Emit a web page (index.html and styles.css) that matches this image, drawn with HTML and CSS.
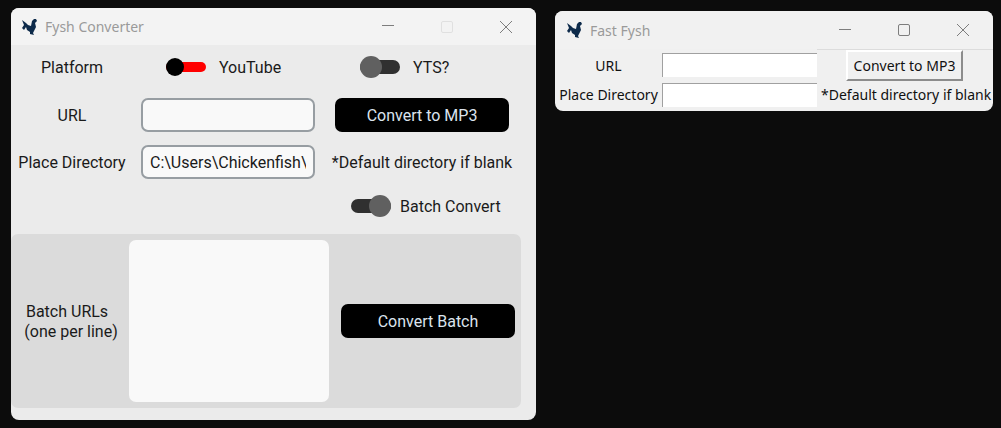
FILE: index.html
```html
<!DOCTYPE html>
<html lang="en">
<head>
    <meta charset="UTF-8">
    <title>Fysh Converter</title>
    <link rel="stylesheet" href="styles.css">
</head>
<body>
<div class="desktop">
    <!-- CustomTkinter window -->
    <div class="window fysh">
        <div class="titlebar">
            <svg class="app-icon" viewBox="0 0 18 18"><path d="M1 2L5 5L7 7L10 8L11 3L13 1L15 1L16 3L14 5L15 9L13 13L12 15L13 17L9 16L9 14L6 12L5 9L3 12L1 10L3 7Z"/></svg>
            <span class="title">Fysh Converter</span>
            <div class="caption">
                <div class="cap-btn"><svg viewBox="0 0 14 14"><path d="M1 5.5h12"/></svg></div>
                <div class="cap-btn off"><svg viewBox="0 0 14 14"><rect x="1.5" y="1.5" width="11" height="11" rx="1.5"/></svg></div>
                <div class="cap-btn"><svg viewBox="0 0 14 14"><path d="M1 1l12 12M13 1L1 13"/></svg></div>
            </div>
        </div>

        <div class="form">
            <div class="lbl">Platform</div>
            <div class="sw-cell">
                <span class="switch small"><i></i></span>
                <span>YouTube</span>
            </div>
            <div class="sw-cell">
                <span class="switch"><i></i></span>
                <span>YTS?</span>
            </div>

            <div class="lbl">URL</div>
            <input class="entry" type="text">
            <button class="btn">Convert to MP3</button>

            <div class="lbl">Place Directory</div>
            <input class="entry" type="text" value="C:\Users\Chickenfish\">
            <div class="note">*Default directory if blank</div>

            <div></div>
            <div></div>
            <div class="sw-cell batch">
                <span class="switch on"><i></i></span>
                <span>Batch Convert</span>
            </div>
        </div>

        <div class="panel">
            <div class="lbl batch-lbl">Batch URLs&nbsp;&nbsp;<br>(one per line)</div>
            <textarea class="batch-box"></textarea>
            <button class="btn">Convert Batch</button>
        </div>
    </div>

    <!-- plain tk window -->
    <div class="window fast">
        <div class="titlebar">
            <svg class="app-icon" viewBox="0 0 18 18"><path d="M1 2L5 5L7 7L10 8L11 3L13 1L15 1L16 3L14 5L15 9L13 13L12 15L13 17L9 16L9 14L6 12L5 9L3 12L1 10L3 7Z"/></svg>
            <span class="title">Fast Fysh</span>
            <div class="caption">
                <div class="cap-btn"><svg viewBox="0 0 14 14"><path d="M1 6.5h12"/></svg></div>
                <div class="cap-btn"><svg viewBox="0 0 14 14"><rect x="1.5" y="1.5" width="11" height="11" rx="1.5"/></svg></div>
                <div class="cap-btn"><svg viewBox="0 0 14 14"><path d="M1 1l12 12M13 1L1 13"/></svg></div>
            </div>
        </div>
        <div class="tk-form">
            <div class="tk-lbl">URL</div>
            <input class="tk-entry" type="text">
            <div class="tk-btn-cell"><button class="tk-btn">Convert to MP3</button></div>

            <div class="tk-lbl">Place Directory</div>
            <input class="tk-entry second" type="text">
            <div class="tk-note">*Default directory if blank</div>
        </div>
    </div>
</div>
</body>
</html>
```

FILE: styles.css
```css
body {
    margin: 0;
    background: #0c0c0c;
    font-family: Roboto, sans-serif;
    font-size: 16px;
    color: #1a1a1a;
}
.desktop {
    display: flex;
    align-items: flex-start;
    height: 428px;
    overflow: hidden;
    padding-left: 11px;
    gap: 19px;
}
.window {
    background: #ebebeb;
    border-radius: 8px;
    overflow: hidden;
}
.fysh {
    width: 525px;
    height: 412px;
    margin-top: 8px;
}
.fast {
    width: 438px;
    height: 100px;
    margin-top: 11px;
    background: #f0f0f0;
}

/* title bars */
.titlebar {
    display: flex;
    align-items: center;
    height: 37px;
    background: #f3f3f3;
    padding-left: 10px;
}
.fast .titlebar {
    height: 38px;
    padding-left: 11px;
    background: #f1f1f1;
}
.app-icon {
    width: 18px;
    height: 18px;
    fill: #0d2a4a;
    margin-right: 6px;
    filter: blur(0.4px);
}
.title {
    font-family: "Noto Sans", sans-serif;
    font-size: 14px;
    color: #9a9a9a;
}
.caption {
    display: flex;
    margin-left: auto;
    padding-right: 1px;
}
.cap-btn {
    width: 59px;
    display: flex;
    justify-content: center;
}
.cap-btn svg {
    width: 14px;
    height: 14px;
    fill: none;
    stroke: #7d7d7d;
    stroke-width: 1;
}
.cap-btn.off svg {
    stroke: #e0e0e0;
}

/* main form */
.form {
    display: grid;
    grid-template-columns: 130px 194px 174px;
    grid-template-rows: 36px 34px 34px 28px;
    row-gap: 13px;
    align-items: center;
    padding-top: 4px;
}
.lbl {
    text-align: center;
    padding-right: 8px;
}
.sw-cell {
    display: flex;
    align-items: center;
    padding-left: 25px;
    white-space: nowrap;
}
.batch {
    padding-left: 16px;
}
.switch {
    display: inline-flex;
    flex: none;
    align-items: center;
    width: 40px;
    height: 14px;
    margin-right: 13px;
    background: #303030;
    border-radius: 7px;
}
.switch i {
    display: block;
    width: 22px;
    height: 22px;
    border-radius: 50%;
    background: #606060;
}
.switch.on {
    justify-content: flex-end;
    margin-right: 9px;
}
.switch.small {
    height: 10px;
    background: #f00;
}
.switch.small i {
    width: 18px;
    height: 18px;
    background: #000;
}
.entry {
    box-sizing: border-box;
    width: 174px;
    height: 34px;
    padding: 0 7px;
    border: 2px solid #979da2;
    border-radius: 7px;
    background: #f9f9f9;
    font: 16px Roboto, sans-serif;
    color: #1a1a1a;
    outline: none;
}
.btn {
    width: 174px;
    height: 34px;
    border: 0;
    border-radius: 7px;
    background: #000;
    color: #dce4ee;
    font: 16px Roboto, sans-serif;
}
.note {
    justify-self: center;
    white-space: nowrap;
}

/* batch panel */
.panel {
    display: grid;
    grid-template-columns: 118px 200px auto;
    align-items: center;
    width: 510px;
    height: 174px;
    box-sizing: border-box;
    margin-top: 14px;
    padding: 6px 0;
    background: #dbdbdb;
    border-radius: 7px;
}
.batch-lbl {
    padding: 0 0 0 2px;
    line-height: 20px;
    margin-top: 2px;
    white-space: nowrap;
}
.batch-box {
    box-sizing: border-box;
    width: 200px;
    height: 162px;
    border: 0;
    border-radius: 7px;
    background: #f9f9f9;
    resize: none;
    outline: none;
}
.panel .btn {
    margin-left: 12px;
}

/* tk window */
.tk-form {
    display: grid;
    grid-template-columns: 107px 155px auto;
    font-family: "Noto Sans", sans-serif;
    font-size: 14px;
    color: #111;
}
.tk-lbl {
    text-align: center;
    align-self: center;
}
.tk-entry {
    box-sizing: border-box;
    width: 155px;
    height: 24px;
    margin: 4px 0 0;
    padding: 0;
    border: 0;
    border-top: 1px solid #a0a0a0;
    border-left: 1px solid #a0a0a0;
    background: #fff;
    outline: none;
}
.tk-entry.second {
    margin-top: 1px;
}
.tk-btn-cell {
    padding-left: 29px;
    height: 32px;
    border-top: 1px solid #dcdcdc;
}
.tk-btn {
    display: block;
    box-sizing: border-box;
    width: 117px;
    height: 31px;
    padding: 0;
    background: #f0f0f0;
    border: 2px solid;
    border-color: #fff #8c8c8c #8c8c8c #fff;
    font: 14px "Noto Sans", sans-serif;
    color: #111;
}
.tk-note {
    padding-left: 4px;
    align-self: center;
    white-space: nowrap;
}
```
